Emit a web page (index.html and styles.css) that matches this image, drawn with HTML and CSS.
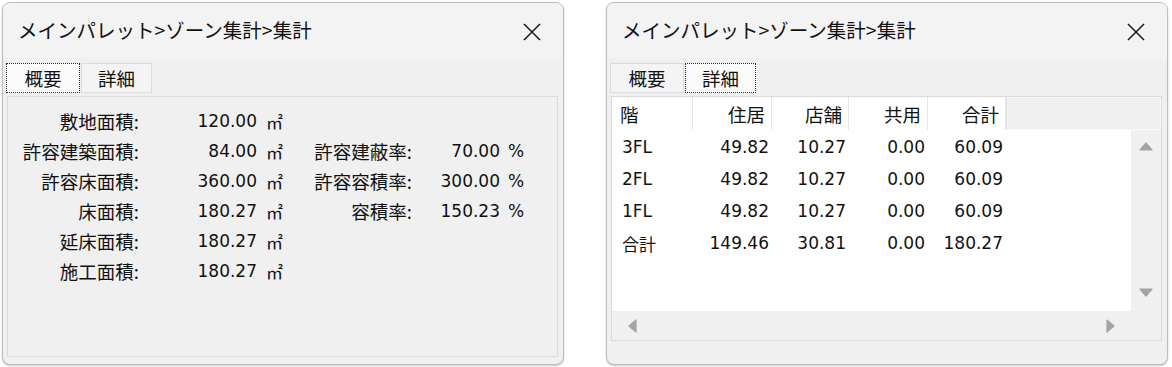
FILE: index.html
```html
<!DOCTYPE html>
<html lang="ja">
<head>
<meta charset="utf-8">
<title>集計</title>
<link rel="stylesheet" href="styles.css">
</head>
<body>
  <div class="win">
    <div class="titlebar">
      <span class="title">メインパレット&gt;ゾーン集計&gt;集計</span>
      <svg class="close" width="20" height="20" viewBox="0 0 20 20"><path d="M2 2L18 18M18 2L2 18" stroke="#1f1f1f" stroke-width="1.6" fill="none"/></svg>
    </div>
    <div class="tabs">
      <div class="tab tab1 sel">概要</div>
      <div class="tab tab2">詳細</div>
    </div>
    <div class="panel summary">
      <div class="grid">
        <div class="lbl">敷地面積:</div><div class="num">120.00</div><div class="unit">㎡</div><div></div><div></div><div></div>
        <div class="lbl">許容建築面積:</div><div class="num">84.00</div><div class="unit">㎡</div><div class="lbl">許容建蔽率:</div><div class="num">70.00</div><div class="unit pct">%</div>
        <div class="lbl">許容床面積:</div><div class="num">360.00</div><div class="unit">㎡</div><div class="lbl">許容容積率:</div><div class="num">300.00</div><div class="unit pct">%</div>
        <div class="lbl">床面積:</div><div class="num">180.27</div><div class="unit">㎡</div><div class="lbl">容積率:</div><div class="num">150.23</div><div class="unit pct">%</div>
        <div class="lbl">延床面積:</div><div class="num">180.27</div><div class="unit">㎡</div><div></div><div></div><div></div>
        <div class="lbl">施工面積:</div><div class="num">180.27</div><div class="unit">㎡</div><div></div><div></div><div></div>
      </div>
    </div>
  </div>

  <div class="win">
    <div class="titlebar">
      <span class="title">メインパレット&gt;ゾーン集計&gt;集計</span>
      <svg class="close" width="20" height="20" viewBox="0 0 20 20"><path d="M2 2L18 18M18 2L2 18" stroke="#1f1f1f" stroke-width="1.6" fill="none"/></svg>
    </div>
    <div class="tabs">
      <div class="tab tab1">概要</div>
      <div class="tab tab2 sel">詳細</div>
    </div>
    <div class="panel detail">
      <div class="lv-head">
        <div class="hc c1 left">階</div>
        <div class="hc c2">住居</div>
        <div class="hc c3">店舗</div>
        <div class="hc c4">共用</div>
        <div class="hc c5">合計</div>
        <div class="hfill"></div>
      </div>
      <div class="lv-main">
        <div class="lv-body">
          <div class="row"><div class="dc c1 left">3FL</div><div class="dc c2">49.82</div><div class="dc c3">10.27</div><div class="dc c4">0.00</div><div class="dc c5">60.09</div></div>
          <div class="row"><div class="dc c1 left">2FL</div><div class="dc c2">49.82</div><div class="dc c3">10.27</div><div class="dc c4">0.00</div><div class="dc c5">60.09</div></div>
          <div class="row"><div class="dc c1 left">1FL</div><div class="dc c2">49.82</div><div class="dc c3">10.27</div><div class="dc c4">0.00</div><div class="dc c5">60.09</div></div>
          <div class="row"><div class="dc c1 left">合計</div><div class="dc c2">149.46</div><div class="dc c3">30.81</div><div class="dc c4">0.00</div><div class="dc c5">180.27</div></div>
        </div>
        <div class="vscroll">
          <svg width="14" height="9" viewBox="0 0 14 9"><polygon points="7,1 13,8 1,8" fill="#a4a4a4" stroke="#a4a4a4" stroke-width="1.2" stroke-linejoin="round"/></svg>
          <svg width="14" height="9" viewBox="0 0 14 9"><polygon points="1,1 13,1 7,8" fill="#a4a4a4" stroke="#a4a4a4" stroke-width="1.2" stroke-linejoin="round"/></svg>
        </div>
      </div>
      <div class="lv-foot">
        <div class="hscroll">
          <svg width="9" height="14" viewBox="0 0 9 14"><polygon points="1,7 8,1 8,13" fill="#a4a4a4" stroke="#a4a4a4" stroke-width="1.2" stroke-linejoin="round"/></svg>
          <svg width="9" height="14" viewBox="0 0 9 14"><polygon points="1,1 8,7 1,13" fill="#a4a4a4" stroke="#a4a4a4" stroke-width="1.2" stroke-linejoin="round"/></svg>
        </div>
        <div class="corner"></div>
      </div>
    </div>
  </div>
</body>
</html>
```
FILE: styles.css
```css
html, body {
  margin: 0;
  background: #ffffff;
}
body {
  width: 1172px;
  height: 367px;
  box-sizing: border-box;
  padding: 2px 0 0 2px;
  display: flex;
  gap: 42px;
  font-family: "Noto Sans CJK JP", sans-serif;
  color: #111111;
  overflow: hidden;
}
.win {
  width: 562px;
  height: 363px;
  box-sizing: border-box;
  border: 1px solid #bdbdbd;
  border-radius: 8px;
  background: #f0f0f0;
  box-shadow: 0 1px 2px rgba(0,0,0,0.22);
  display: flex;
  flex-direction: column;
  overflow: hidden;
}
.titlebar {
  height: 55px;
  flex: none;
  background: #f3f3f3;
  display: flex;
  align-items: center;
  justify-content: space-between;
  padding: 0 21px 0 15px;
  font-size: 19.5px;
  line-height: 1;
}
.title { padding-bottom: 1px; }
.close { display: block; margin-top: 2px; }

.tabs {
  height: 38px;
  flex: none;
  box-sizing: border-box;
  padding: 5px 0 0 3px;
  display: flex;
  align-items: flex-start;
  gap: 1px;
}
.tab {
  height: 30px;
  box-sizing: border-box;
  border: 1px solid #dcdcdc;
  background: #f4f4f4;
  font-size: 18.5px;
  display: flex;
  align-items: center;
  justify-content: center;
  line-height: 1;
}
.tab1 { width: 74px; }
.tab2 { width: 71px; }
.tab.sel {
  background: #fbfbfb;
  border: 1.5px dotted #2a2a2a;
}

.panel {
  margin: 0 5px 0 4px;
  border: 1px solid #dadada;
  box-sizing: border-box;
}
.summary {
  flex: 1;
  margin-bottom: 7px;
  padding-top: 9px;
  background: #f0f0f0;
}
.grid {
  display: grid;
  grid-template-columns: 131px 118px 43px 112px 88px 1fr;
  grid-auto-rows: 30px;
  align-items: center;
}
.lbl {
  text-align: right;
  font-size: 18.5px;
  white-space: nowrap;
}
.num {
  text-align: right;
  font-family: "DejaVu Sans", sans-serif;
  font-size: 17px;
}
.unit {
  padding-left: 9px;
  font-size: 17px;
}
.unit.pct {
  padding-left: 8px;
  font-family: "DejaVu Sans", sans-serif;
}

.detail {
  flex: none;
  background: #ffffff;
  display: flex;
  flex-direction: column;
}
.lv-head {
  height: 33px;
  display: flex;
  background: #ffffff;
}
.hc {
  box-sizing: border-box;
  border-right: 1px solid #e6e6e6;
  display: flex;
  align-items: center;
  justify-content: flex-end;
  padding-right: 6px;
  font-size: 18.5px;
}
.hc.left { justify-content: flex-start; padding-left: 8px; }
.c1 { width: 81px; }
.c2 { width: 79px; }
.c3 { width: 77px; }
.c4 { width: 79px; }
.c5 { width: 78px; }
.hfill {
  flex: 1;
  background: #efefef;
  border: 1px solid #f9f9f9;
  border-left-color: #e4e4e4;
}
.lv-main {
  height: 181px;
  display: flex;
}
.lv-body {
  flex: 1;
  background: #ffffff;
}
.row {
  height: 32px;
  display: flex;
  align-items: center;
}
.dc {
  box-sizing: border-box;
  text-align: right;
  padding-right: 3px;
  font-family: "DejaVu Sans", "Noto Sans CJK JP", sans-serif;
  font-size: 17px;
}
.dc.left { text-align: left; padding-left: 10px; }
.row:first-child { margin-top: 1px; }
.vscroll {
  width: 30px;
  background: #f0f0f0;
  display: flex;
  flex-direction: column;
  align-items: center;
  justify-content: space-between;
  padding: 12px 0 14px;
  box-sizing: border-box;
}
.vscroll svg, .hscroll svg { display: block; }
.lv-foot {
  height: 29px;
  display: flex;
  background: #f0f0f0;
}
.hscroll {
  flex: 1;
  display: flex;
  align-items: center;
  justify-content: space-between;
  padding: 0 16px 0 16px;
}
.corner {
  width: 30px;
}
```
